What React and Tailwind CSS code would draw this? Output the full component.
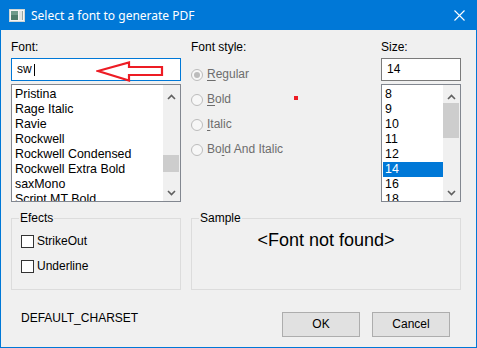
import React from 'react';

const fontList = ['Pristina', 'Rage Italic', 'Ravie', 'Rockwell', 'Rockwell Condensed', 'Rockwell Extra Bold', 'saxMono', 'Script MT Bold'];
const sizeList = ['8', '9', '10', '11', '12', '14', '16', '18'];

const ChevronUp = () => (
    <svg width="9" height="6" viewBox="0 0 9 6">
        <polyline points="1,5 4.5,1.5 8,5" fill="none" stroke="#606060" strokeWidth="1.6" />
    </svg>
);

const ChevronDown = () => (
    <svg width="9" height="6" viewBox="0 0 9 6">
        <polyline points="1,1 4.5,4.5 8,1" fill="none" stroke="#606060" strokeWidth="1.6" />
    </svg>
);

// vertical scrollbar of the list boxes
const ScrollBar = ({ thumbTop, thumbHeight }) => (
    <div className="w-[17px] bg-[#f0f0f0] flex flex-col">
        <div className="h-[18px] flex items-end justify-center pb-[3px]">
            <ChevronUp />
        </div>
        <div className="flex-1">
            <div className={`${thumbTop} ${thumbHeight} bg-[#cdcdcd] mr-[1px]`} />
        </div>
        <div className="h-[18px] flex items-center justify-center pt-[2px]">
            <ChevronDown />
        </div>
    </div>
);

const Radio = ({ checked, children }) => (
    <div className="h-[25px] flex items-center gap-[4px]">
        <div className="w-[12px] h-[12px] rounded-full border border-[#bcbcbc] bg-[#f7f7f7] flex items-center justify-center">
            {checked && <div className="w-[6px] h-[6px] rounded-full bg-[#bcbcbc]" />}
        </div>
        <span className="text-[#6d6d6d]">{children}</span>
    </div>
);

const CheckBox = ({ label }) => (
    <div className="h-[25px] flex items-center gap-[3px]">
        <div className="w-[13px] h-[13px] border border-[#333333] bg-white" />
        <span>{label}</span>
    </div>
);

export default function App() {
    return (
        <div
            className="w-[477px] h-[348px] bg-[#f0f0f0] border-x border-b border-[#0078d7] flex flex-col text-[12px] text-black leading-[15px] overflow-hidden"
            style={{ fontFamily: '"Liberation Sans", Arial, sans-serif' }}
        >
            {/* title bar */}
            <div className="h-[30px] bg-[#0078d7] flex items-center pl-[8px] pr-[10px] shrink-0">
                <svg width="16" height="13" viewBox="0 0 16 13">
                    <rect x="0.5" y="0.5" width="15" height="12" fill="#f4f4f4" stroke="#d0d6d4" />
                    <rect x="2" y="2" width="7" height="9" fill="#4e7c6c" />
                    <rect x="2" y="2" width="7" height="4" fill="#6e9a8a" />
                    <rect x="10" y="2" width="4" height="9" fill="#dfe4e2" />
                    <rect x="13" y="2" width="1" height="9" fill="#9aa8a2" />
                </svg>
                <span className="ml-[6px] text-white text-[12px]" style={{ fontFamily: '"Noto Sans", sans-serif' }}>
                    Select a font to generate PDF
                </span>
                <svg className="ml-auto mr-[1px]" width="11" height="11" viewBox="0 0 11 11">
                    <path d="M0.5 0.5 L10.5 10.5 M10.5 0.5 L0.5 10.5" stroke="white" strokeWidth="1.1" />
                </svg>
            </div>

            <div className="flex-1 pt-[10px] px-[10px] flex flex-col">
                {/* top row */}
                <div className="flex gap-[10px]">
                    <div className="w-[170px] flex flex-col">
                        <div className="h-[15px]">Font:</div>
                        <div className="relative mt-[3px] h-[23px] border border-[#0078d7] bg-white flex items-center pl-[5px]">
                            <span>sw</span>
                            <span className="ml-[2px] w-[1px] h-[12px] bg-black" />
                            {/* red arrow annotation */}
                            <svg className="absolute left-[84px] top-[2px]" width="70" height="22" viewBox="0 0 70 22">
                                <polygon
                                    points="2,10 33,1.5 33,6 66,6 66,14 33,14 33,19.5"
                                    fill="none"
                                    stroke="#ed1c24"
                                    strokeWidth="2.2"
                                    strokeLinejoin="miter"
                                />
                            </svg>
                        </div>
                        <div className="mt-[3px] h-[118px] border border-[#828790] bg-white flex">
                            <div className="flex-1 pt-[2px] pl-[3px] overflow-hidden text-[12.4px]">
                                {fontList.map((f) => (
                                    <div key={f} className="h-[15px] whitespace-nowrap">{f}</div>
                                ))}
                            </div>
                            <ScrollBar thumbTop="mt-[52px]" thumbHeight="h-[17px]" />
                        </div>
                    </div>

                    <div className="w-[180px] flex flex-col relative">
                        <div className="h-[15px]">Font style:</div>
                        <div className="mt-[7px] flex flex-col">
                            <Radio checked>
                                <span className="underline underline-offset-2">R</span>egular
                            </Radio>
                            <Radio>
                                <span className="underline underline-offset-2">B</span>old
                            </Radio>
                            <Radio>
                                <span className="underline underline-offset-2">I</span>talic
                            </Radio>
                            <Radio>
                                Bo<span className="underline underline-offset-2">l</span>d And Italic
                            </Radio>
                        </div>
                        {/* stray red dot */}
                        <div className="absolute left-[103px] top-[56px] w-[4px] h-[4px] bg-[#ed1c24]" />
                    </div>

                    <div className="w-[80px] flex flex-col">
                        <div className="h-[15px]">Size:</div>
                        <div className="mt-[3px] h-[23px] border border-[#7a7a7a] bg-white flex items-center pl-[5px]">
                            14
                        </div>
                        <div className="mt-[3px] h-[118px] border border-[#828790] bg-white flex">
                            <div className="flex-1 pt-[2px] pl-[1px] overflow-hidden text-[12.4px]">
                                {sizeList.map((s) => (
                                    <div
                                        key={s}
                                        className={`h-[15px] pl-[2px] ${s === '14' ? 'bg-[#0078d7] text-white' : ''}`}
                                    >
                                        {s}
                                    </div>
                                ))}
                            </div>
                            <ScrollBar thumbTop="mt-0" thumbHeight="h-[35px]" />
                        </div>
                    </div>
                </div>

                {/* group boxes */}
                <div className="flex gap-[10px] mt-[16px]">
                    <div className="relative w-[170px] h-[72px] border border-[#dcdcdc] pt-[10px] pl-[9px]">
                        <span className="absolute -top-[8px] left-[7px] px-[1px] bg-[#f0f0f0]">Efects</span>
                        <CheckBox label="StrikeOut" />
                        <CheckBox label="Underline" />
                    </div>
                    <div className="relative w-[270px] h-[72px] border border-[#dcdcdc] pt-[10px] flex justify-center">
                        <span className="absolute -top-[8px] left-[7px] px-[1px] bg-[#f0f0f0]">Sample</span>
                        <span className="text-[18px] leading-[22px]">&lt;Font not found&gt;</span>
                    </div>
                </div>

                {/* bottom row */}
                <div className="flex items-start mt-[21px]">
                    <div className="pl-[10px]">DEFAULT_CHARSET</div>
                    <div className="ml-auto mr-[16px] mt-[1px] flex gap-[12px]">
                        <button className="w-[78px] h-[25px] bg-[#e1e1e1] border border-[#adadad] text-[12px]">OK</button>
                        <button className="w-[78px] h-[25px] bg-[#e1e1e1] border border-[#adadad] text-[12px]">Cancel</button>
                    </div>
                </div>
            </div>
        </div>
    );
}
